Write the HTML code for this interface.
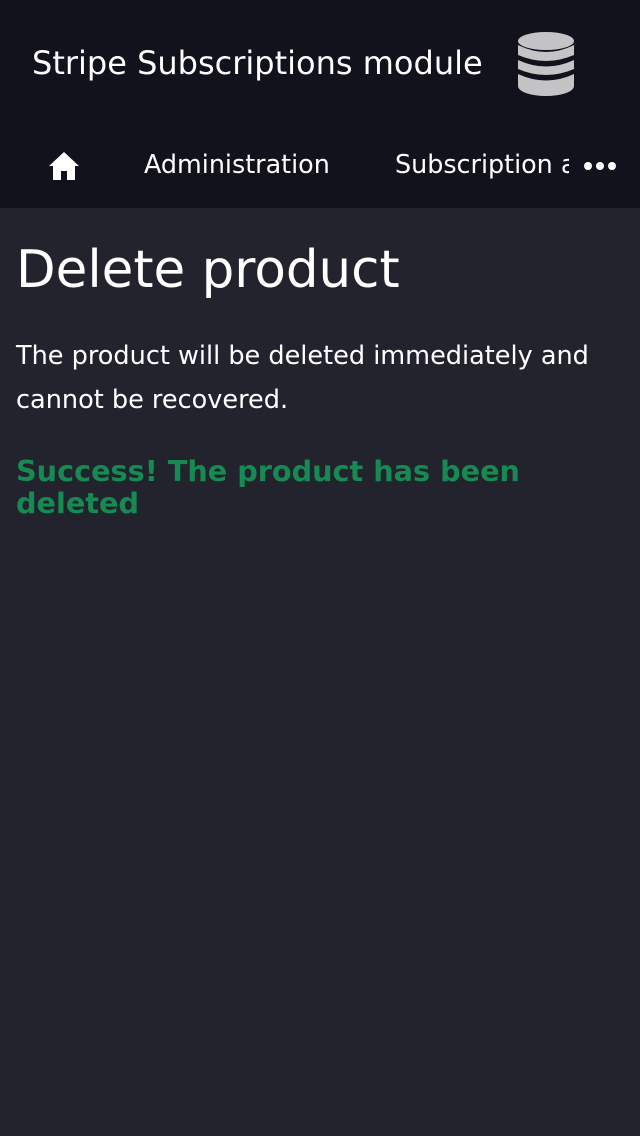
<!DOCTYPE html>
<html><head><meta charset="utf-8"><style>
html,body{margin:0;padding:0;width:640px;height:1136px;overflow:hidden;background:#22232d;font-family:"DejaVu Sans","Liberation Sans",sans-serif;color:#fff}
.top{background:#11121c;height:208px;position:relative}
.t{position:absolute;left:32px;top:44px;font-size:32px;white-space:nowrap}
.db{position:absolute;left:517px;top:31px}
.nav{position:absolute;top:149px;font-size:25.4px;white-space:nowrap}
h1{position:absolute;left:16px;top:240px;margin:0;font-size:51.5px;font-weight:normal}
p{position:absolute;left:16px;top:334px;margin:0;font-size:25.55px;line-height:44px;width:620px}
.s{position:absolute;left:16px;top:455px;font-size:28.7px;font-weight:bold;color:#168a52;line-height:32px;width:600px}
</style></head><body>
<div class="top">
<div class="t">Stripe Subscriptions module</div>
<svg class="db" width="58" height="66" viewBox="0 0 58 66"><g fill="#c4c4c6">
<ellipse cx="29" cy="10" rx="28" ry="9"/>
<path d="M1 14 Q29 28 57 14 V24 Q29 36 1 24Z"/>
<path d="M1 29 Q29 42 57 29 V38 Q29 50 1 38Z"/>
<path d="M1 43 Q29 56 57 43 V55 A28 10 0 0 1 1 55Z"/></g></svg>
<svg style="position:absolute;left:48px;top:151px" width="32" height="29" viewBox="0 0 32 29"><path d="M16 1 L31 15 H27 V29 H19 V20 H13 V29 H5 V15 H1Z" fill="#fff"/></svg>
<div class="nav" style="left:144px">Administration</div>
<div class="nav" style="left:395px;width:174px;overflow:hidden">Subscription and</div>
<svg style="position:absolute;left:583px;top:161px" width="34" height="10"><circle cx="5" cy="5" r="4" fill="#fff"/><circle cx="17" cy="5" r="4" fill="#fff"/><circle cx="29" cy="5" r="4" fill="#fff"/></svg>
</div>
<h1>Delete product</h1>
<p>The product will be deleted immediately and cannot be recovered.</p>
<div class="s">Success! The product has been deleted</div>
</body></html>
